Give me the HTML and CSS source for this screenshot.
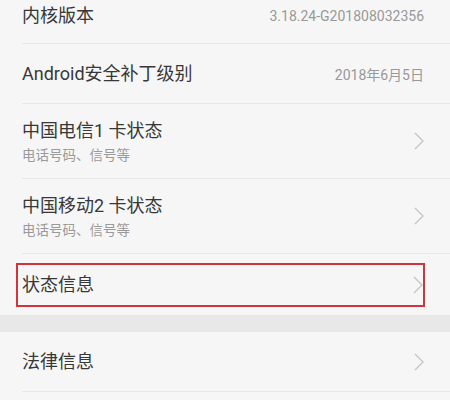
FILE: index.html
```html
<!DOCTYPE html>
<html>
<head>
<meta charset="utf-8">
<link rel="stylesheet" href="styles.css">
</head>
<body>
<div class="page">
  <div class="group">
    <div class="row row-first">
      <div class="title">内核版本</div>
      <div class="value">3.18.24-G201808032356</div>
    </div>
    <div class="row row-single">
      <div class="title">Android安全补丁级别</div>
      <div class="value">2018年6月5日</div>
    </div>
    <div class="row row-double">
      <div class="texts">
        <div class="title">中国电信1 卡状态</div>
        <div class="sub">电话号码、信号等</div>
      </div>
      <svg class="chev" viewBox="0 0 10 18" width="10" height="18"><polyline points="1,1 9,9 1,17" fill="none" stroke="#c2c2c2" stroke-width="1.2"/></svg>
    </div>
    <div class="row row-double">
      <div class="texts">
        <div class="title">中国移动2 卡状态</div>
        <div class="sub">电话号码、信号等</div>
      </div>
      <svg class="chev" viewBox="0 0 10 18" width="10" height="18"><polyline points="1,1 9,9 1,17" fill="none" stroke="#c2c2c2" stroke-width="1.2"/></svg>
    </div>
    <div class="row row-marked">
      <div class="mark">
        <div class="title">状态信息</div>
        <svg class="chev" viewBox="0 0 10 18" width="10" height="18"><polyline points="1,1 9,9 1,17" fill="none" stroke="#c2c2c2" stroke-width="1.2"/></svg>
      </div>
    </div>
  </div>
  <div class="gap"></div>
  <div class="group">
    <div class="row row-single">
      <div class="title">法律信息</div>
      <svg class="chev" viewBox="0 0 10 18" width="10" height="18"><polyline points="1,1 9,9 1,17" fill="none" stroke="#c2c2c2" stroke-width="1.2"/></svg>
    </div>
    <div class="row row-single"></div>
  </div>
</div>
</body>
</html>
```

FILE: styles.css
```css
html, body {
  margin: 0;
  padding: 0;
  background: #f6f6f6;
}
.page {
  width: 450px;
  height: 400px;
  overflow: hidden;
  font-family: Roboto, "Noto Sans CJK SC", sans-serif;
  color: #333333;
}
.group {
  background: #f6f6f6;
}
.row {
  display: flex;
  align-items: center;
  justify-content: space-between;
  margin-left: 22px;
  padding-right: 26px;
  border-bottom: 1px solid #e7e7e7;
  box-sizing: border-box;
}
.row-first {
  height: 44px;
  padding-bottom: 12px;
}
.row-single {
  height: 60px;
}
.row-double {
  height: 75px;
}
.row-marked {
  height: 61px;
  margin-left: 16px;
  padding-right: 25px;
  border-bottom: none;
  padding-top: 1px;
}
.mark {
  flex: 1;
  height: 44px;
  box-sizing: border-box;
  border: 2px solid #d0343c;
  display: flex;
  align-items: center;
  justify-content: space-between;
  padding-left: 4px;
  padding-right: 0;
}
.title {
  font-size: 18px;
  line-height: 24px;
  color: #383838;
}
.sub {
  font-size: 13.5px;
  line-height: 18px;
  color: #9a9a9a;
  margin-top: 3px;
}
.value {
  font-size: 14px;
  color: #999999;
}
.chev {
  display: block;
  flex: none;
}
.gap {
  height: 17px;
  background: #e8e8e8;
}
```
